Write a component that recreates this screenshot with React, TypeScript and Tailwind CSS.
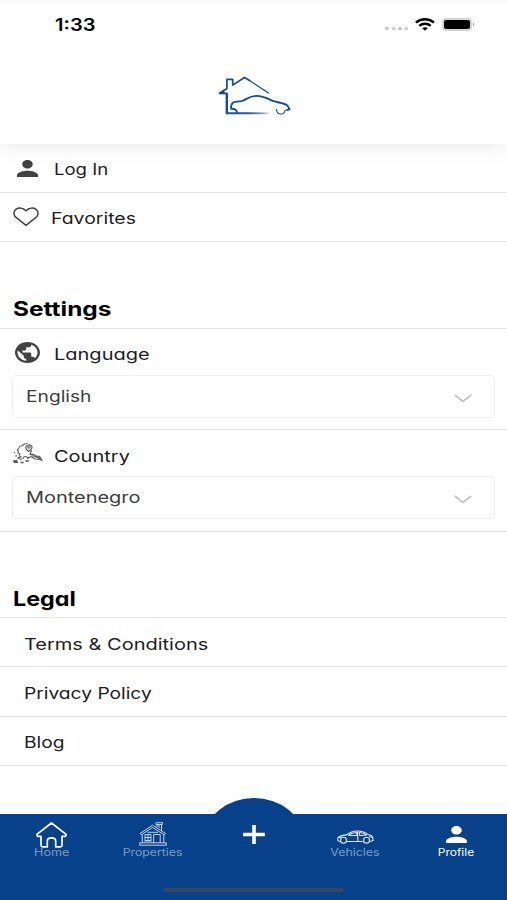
import React from 'react';

const FONT = "font-['Inter','Open_Sans',sans-serif] [font-feature-settings:'cv11','ss03']";

// Wide label, stretched from its left edge
function Label({ children, className = '' }: { children: React.ReactNode; className?: string }) {
  return (
    <span className={`inline-block w-fit origin-left whitespace-nowrap ${className}`}>{children}</span>
  );
}

function PersonIcon({ className }: { className: string }) {
  return (
    <svg viewBox="4 4 16 16" preserveAspectRatio="none" className={className} fill="currentColor">
      <path d="M12 12c2.21 0 4-1.79 4-4s-1.79-4-4-4-4 1.79-4 4 1.79 4 4 4zm0 2c-2.67 0-8 1.34-8 4v2h16v-2c0-2.66-5.33-4-8-4z" />
    </svg>
  );
}

function GlobeIcon() {
  return (
    <svg viewBox="2 2 20 20" preserveAspectRatio="none" className="h-[21px] w-[25px] text-[#424242]" fill="currentColor">
      <path d="M12 2C6.48 2 2 6.48 2 12s4.48 10 10 10 10-4.48 10-10S17.52 2 12 2zm-1 17.93c-3.95-.49-7-3.85-7-7.93 0-.62.08-1.21.21-1.79L9 15v1c0 1.1.9 2 2 2v1.93zm6.9-2.54c-.26-.81-1-1.39-1.9-1.39h-1v-3c0-.55-.45-1-1-1H8v-2h2c.55 0 1-.45 1-1V7h2c1.1 0 2-.9 2-2v-.41c2.93 1.19 5 4.06 5 7.41 0 2.08-.8 3.97-2.1 5.39z" />
    </svg>
  );
}

function HeartIcon() {
  return (
    <svg viewBox="0 0 26 20" className="h-5 w-[26px]" fill="none" stroke="#444" strokeWidth="1.5" strokeLinejoin="round">
      <path d="M13 18.4 3 10.4C.2 8 .3 4.400 2.900 2.400 5.800.4 10 .7 13 3.700 16 .7 20.200.4 23.100 2.400c2.600 2 2.700 5.600-.1 8z" />
    </svg>
  );
}

// Map of Europe with a location pin
function RegionIcon() {
  return (
    <svg viewBox="0 0 30 21" className="h-[21px] w-[30px]" fill="none" stroke="#555" strokeWidth="1.1" strokeLinejoin="round">
      <path d="M10 2 6.500 3.500l-.7 2-2 1.500 1.700 1-.8 2 2.300.5-1 2 2 1.500-3.500.5 2 1.800 3-.4 1.500-2.200 2.500-.2 2 3M10 2l2-1.200 2.500-.3" strokeDasharray="2.4 .5" />
      <path d="M15.500 8.500c-2.500-2-3.300-3.600-2.200-5.300 1.200-2 4.800-2 5.600 0 .8 1.900-1 3.500-3.400 5.300z" />
      <circle cx="16" cy="4" r="1.200" />
      <path d="M18.500 7 17 11.500l3-.2 3.500 1.700 3 .2 2.500 4.100-3.500-1-3.500-.3-3.500-2.200-4 .8" />
      <path d="M18.500 12.500l7.500 2.700M20.500 12.500l7 3.500M23 13.500l4.500 1.300" strokeWidth=".9" />
      <path d="M.3 18.200l4-.7M1 19.300h4M7.500 19.500h3.200M12.300 18h3.500M1.200 9.500l.8.300M2.500 13l1.200-.3" strokeWidth="1.6" />
    </svg>
  );
}

function Logo() {
  return (
    <svg viewBox="216 74 78 44" className="h-11 w-[78px]" fill="none" stroke="#174b96" strokeLinejoin="round" strokeLinecap="round">
      <defs>
        <linearGradient id="floor" gradientUnits="userSpaceOnUse" x1="226" y1="0" x2="269" y2="0">
          <stop offset="0.5" stopColor="#174b96" />
          <stop offset="1" stopColor="#174b96" stopOpacity="0.1" />
        </linearGradient>
      </defs>
      <path d="M226.800 113V93.300h-7.300l7.400-4.800V79.300h5.800v5.800l11.800-7.600 5 3" strokeWidth="1.7" />
      <path d="M219.500 93.300l4-2.600 1 2.600z" fill="#174b96" strokeWidth="1" />
      <path d="M249.500 80.500 268.500 93" strokeWidth="1.2" />
      <path d="M226.800 94v19.300" strokeWidth="2.3" />
      <path d="M226.800 112.800h42v1h-42z" fill="url(#floor)" stroke="url(#floor)" strokeWidth=".9" />
      <path d="M237 112.500c-.3-3-2.500-3.800-5.800-3.700-.4-3.300.3-6 3.600-6.900l7-.8c4.500-1.600 7.500-5.200 14.700-5.200 6.900 0 10.800 2.600 17.200 5.300 5.800 1.700 13.300 2.200 14.300 5.200l1.500 2.800-1.700.7" strokeWidth="1.9" />
      <path d="M276.500 109.300c0 5.900 7.700 6.300 8.500 1.200l2.500-1" strokeWidth="1.1" />
    </svg>
  );
}

function StatusBar() {
  return (
    <div className="flex h-12 items-center justify-between pl-[55px] pr-8">
      <Label className="mt-0.5 scale-x-[1.18] text-[17px] font-semibold leading-none text-black">1:33</Label>
      <div className="flex items-center">
        <div className="mr-[7px] mt-2 flex gap-[3px]">
          {[0, 1, 2, 3].map((i) => (
            <span key={i} className="h-[3px] w-[3.5px] rounded-full bg-[#c6c6c6]" />
          ))}
        </div>
        <svg viewBox="0 0 20 13" className="mr-[7px] h-[13px] w-5" fill="none" stroke="#000" strokeWidth="2.4">
          <path d="M1 4.600C6 .2 14 .2 19 4.600" />
          <path d="M4.200 7.900c3.300-2.800 8.300-2.800 11.600 0" />
          <path d="M10 12.800 7.200 10.300c1.600-1.300 4-1.300 5.600 0z" fill="#000" stroke="none" />
        </svg>
        <svg viewBox="0 0 33 13" className="h-[13px] w-[33px]">
          <rect x=".7" y=".7" width="28.6" height="11.6" rx="3.5" fill="#dcdcdc" stroke="#cfcfcf" strokeWidth="1.2" />
          <rect x="2" y="2" width="26" height="9" rx="2" fill="#000" />
          <path d="M31 4.500c1.700.5 1.700 3.500 0 4z" fill="#aaa" />
        </svg>
      </div>
    </div>
  );
}

function Select({ value, className }: { value: string; className: string }) {
  return (
    <div className="mx-3 flex h-[43px] items-center justify-between rounded border border-[#f0f0f0] pl-[13px] pr-[22px]">
      <Label className={`-mt-0.5 text-[16px] text-[#3c3c3c] ${className}`}>{value}</Label>
      <svg viewBox="0 0 18 9" className="mt-1 h-[9px] w-[18px]" fill="none" stroke="#c2c2c2" strokeWidth="1.7">
        <path d="M.8 1 9 7.500 17.200 1" />
      </svg>
    </div>
  );
}

const legal = [
  { label: 'Terms & Conditions', scale: 'scale-x-[1.25]' },
  { label: 'Privacy Policy', scale: 'scale-x-[1.2]' },
  { label: 'Blog', scale: 'scale-x-[1.2]' },
];

function HomeIcon() {
  return (
    <svg viewBox="0 0 31 26" className="h-[26px] w-[31px]" fill="none" stroke="#fff" strokeWidth="1.7" strokeLinejoin="round">
      <path d="M15.500 1 1.200 12.200c-.6 1.400.4 2.200 1.600 2.200H5v8.800c0 1 .6 1.600 1.600 1.600h4.700v-5.600c0-4.400 8.400-4.400 8.400 0v5.600h4.700c1 0 1.600-.6 1.600-1.600v-8.800h2.200c1.200 0 2.200-.8 1.600-2.200z" />
    </svg>
  );
}

function HouseIcon() {
  return (
    <svg viewBox="0 0 28 24" className="h-6 w-7" fill="none" stroke="#c3d3e8" strokeWidth="1" strokeLinejoin="round">
      <path d="M1 11.500 13.500 3.200 26.500 11.500l-1.200 1.300L13.500 5.500 2.200 12.800z" />
      <path d="M3.200 12.500v8.200M24.800 12.500v8.200M.7 20.800h26.600v2.400H.7z" />
      <path d="M18 5V2.500h-1V.7h6.500v1.800h-1V8.500M18 2.500h4.500M20 3v3" />
      <rect x="6" y="12.500" width="6" height="6" />
      <path d="M9 12.500v6M6 15.500h6M5.300 19h7.400" />
      <path d="M14.700 20.800v-8.300h6.500v8.300" />
      <path d="M8.500 10.300h10.500" />
    </svg>
  );
}

function CarIcon() {
  return (
    <svg viewBox="0 0 37 14" preserveAspectRatio="none" className="h-3.5 w-[37px]" fill="none" stroke="#e3ebf6" strokeWidth="1.1" strokeLinejoin="round">
      <path d="M3 11.500l-2-.8-.3-2.500c.5-2 4-2.800 8.700-3.300 3-2.200 5.500-3.900 10.600-3.900 5 0 8.500 1.200 11.500 3.800 2.800.4 4.300 1.700 4.300 3.500l.4 2.300-3 1M9.600 11.500h16" />
      <path d="M11.500 5.200C14 3.300 16 2.500 19.500 2.500l.8 3zM22 2.500c3 0 5.500.8 7.500 2.500l-7 .5z" />
      <path d="M20.300 1.500l.7 9.500M1 7.500l3.500-.3M32 6.500l3.500 1" />
      <circle cx="6.500" cy="10.300" r="3" />
      <circle cx="29.500" cy="10.300" r="3" />
    </svg>
  );
}

const tabLabel = 'text-[10.5px] leading-none whitespace-nowrap';

function TabBar() {
  return (
    <nav className="relative flex h-[86px] bg-[#07418a] text-[#7c9dc8]">
      {/* bump behind the add button */}
      <svg viewBox="0 0 96 17" className="absolute -top-4 left-[206px] h-[17px] w-24">
        <ellipse cx="48" cy="38" rx="48" ry="38" fill="#07418a" />
      </svg>
      <div className="flex w-[103px] flex-col items-center pt-2">
        <HomeIcon />
        <span className={`${tabLabel} scale-x-[1.2]`}>Home</span>
      </div>
      <div className="flex w-[100px] flex-col items-center pt-2">
        <HouseIcon />
        <span className={`${tabLabel} mt-0.5 scale-x-[1.17]`}>Properties</span>
      </div>
      <div className="relative flex w-[102px] justify-center pt-[11px]">
        <svg viewBox="0 0 22 19" className="h-[19px] w-[22px]" stroke="#fff" strokeWidth="3.6">
          <path d="M11 0v19M0 9.500h22" />
        </svg>
      </div>
      <div className="flex w-[100px] flex-col items-center pt-4">
        <CarIcon />
        <span className={`${tabLabel} mt-1 scale-x-[1.18]`}>Vehicles</span>
      </div>
      <div className="flex w-[102px] flex-col items-center pt-3 text-white">
        <PersonIcon className="h-[17px] w-[21px]" />
        <span className={`${tabLabel} mt-[5px] scale-x-[1.14]`}>Profile</span>
      </div>
      <span className="absolute bottom-2 left-[163px] h-1 w-[181px] rounded-full bg-[#38465e]" />
    </nav>
  );
}

export default function App() {
  return (
    <div className={`flex h-[900px] w-[507px] flex-col overflow-hidden bg-white text-[16px] leading-none text-[#1c1c1c] ${FONT}`}>
      <header className="relative h-36 border-t-[3px] border-[#fafafa] bg-white shadow-[0_4px_18px_rgba(0,0,0,0.08)]">
        <div className="-mt-[3px]">
          <StatusBar />
        </div>
        <div className="flex pl-[216px] pt-[26px]">
          <Logo />
        </div>
      </header>

      <main className="flex-1">
        <div className="flex h-[49px] items-center border-b border-[#e4e4e4] pl-[17px]">
          <PersonIcon className="h-[17px] w-[21px] text-[#424242]" />
          <Label className="ml-4 mt-0.5 scale-x-[1.16]">Log In</Label>
        </div>
        <div className="flex h-[49px] items-center border-b border-[#e4e4e4] pl-[13px]">
          <HeartIcon />
          <Label className="ml-3 mt-0.5 scale-x-[1.215]">Favorites</Label>
        </div>

        <h2 className="flex h-[87px] items-end border-b border-[#e4e4e4] pb-[9px] pl-[13px] font-bold text-black">
          <Label className="scale-x-[1.22] text-[20px]">Settings</Label>
        </h2>
        <section className="h-[101px] border-b border-[#e4e4e4]">
          <div className="flex h-[46px] items-center pl-[15px]">
            <GlobeIcon />
            <Label className="ml-3.5 mt-1 scale-x-[1.25]">Language</Label>
          </div>
          <Select value="English" className="scale-x-[1.2]" />
        </section>
        <section className="h-[102px] border-b border-[#e4e4e4]">
          <div className="flex h-[46px] items-center pl-[13px]">
            <RegionIcon />
            <Label className="ml-[11px] mt-1.5 scale-x-[1.25]">Country</Label>
          </div>
          <Select value="Montenegro" className="scale-x-[1.245]" />
        </section>

        <h2 className="flex h-[86px] items-end border-b border-[#e4e4e4] pb-2 pl-[13px] font-bold text-black">
          <Label className="scale-x-[1.165] text-[20px]">Legal</Label>
        </h2>
        {legal.map((item) => (
          <div key={item.label} className="flex h-[49.3px] items-center border-b border-[#e4e4e4] pl-6 pt-[3px]">
            <Label className={item.scale}>{item.label}</Label>
          </div>
        ))}
      </main>

      <TabBar />
    </div>
  );
}
